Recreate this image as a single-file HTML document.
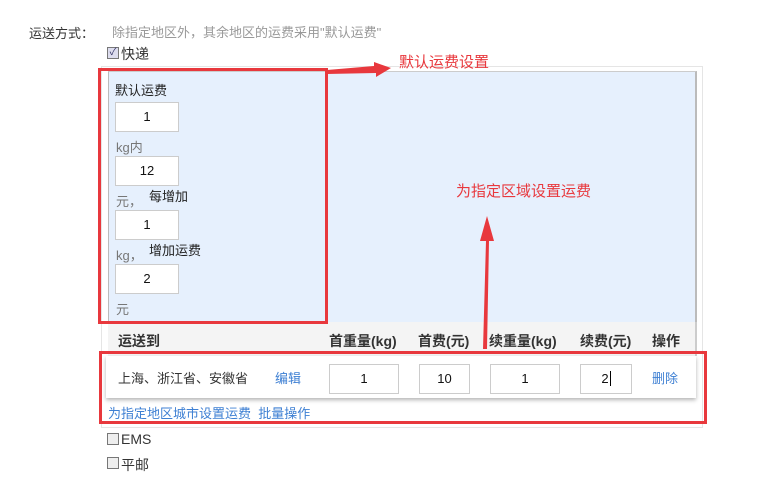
<!DOCTYPE html>
<html><head><meta charset="utf-8"><style>
body{margin:0;width:764px;height:477px;background:#fff;position:relative;overflow:hidden;font-family:"Liberation Sans","Noto Sans CJK SC",sans-serif;font-size:13px;color:#333}
.a{position:absolute;white-space:nowrap}
.inp{position:absolute;background:#fff;border:1px solid #ccc;box-sizing:border-box;text-align:center;font-size:13px;color:#111}
.cb{position:absolute;width:12px;height:12px;border:1px solid #777;background:#eee;box-sizing:border-box}
.red{position:absolute;border:3px solid #e8383d;box-sizing:border-box}
.lnk{color:#3d7fd3}
.h{font-weight:bold;font-size:14px;color:#333}
</style></head><body>
<div class="a" style="left:29px;top:23px;color:#333">运送方式：</div>
<div class="a" style="left:112px;top:22px;color:#999">除指定地区外，其余地区的运费采用"默认运费"</div>
<div class="cb" style="left:107px;top:47px;background:#dde;font-size:10px;line-height:10px;color:#336;text-align:center">✓</div>
<div class="a" style="left:121px;top:44px;font-size:14px">快递</div>

<div style="position:absolute;left:101px;top:66px;width:602px;height:362px;border:1px solid #e5e5e5;box-sizing:border-box"></div>
<div style="position:absolute;left:108px;top:71px;width:589px;height:251px;background:#e6f0fd;border-left:1px solid #bbb;border-top:1px solid #ccc;border-right:2px solid #bbb;box-sizing:border-box"></div>
<div style="position:absolute;left:108px;top:322px;width:589px;height:34px;background:#f4f4f4;border-right:2px solid #ccc;box-sizing:border-box"></div>

<div class="a" style="left:115px;top:80px;font-size:13px;color:#222">默认运费</div>
<div class="inp" style="left:115px;top:102px;width:64px;height:30px;line-height:28px">1</div>
<div class="a" style="left:116px;top:137px;color:#777">kg内</div>
<div class="inp" style="left:115px;top:156px;width:64px;height:30px;line-height:28px">12</div>
<div class="a" style="left:116px;top:191px;color:#777">元，</div>
<div class="a" style="left:149px;top:186px;color:#222">每增加</div>
<div class="inp" style="left:115px;top:210px;width:64px;height:30px;line-height:28px">1</div>
<div class="a" style="left:116px;top:245px;color:#777">kg，</div>
<div class="a" style="left:149px;top:240px;color:#222">增加运费</div>
<div class="inp" style="left:115px;top:264px;width:64px;height:30px;line-height:28px">2</div>
<div class="a" style="left:116px;top:299px;color:#777">元</div>

<div class="a h" style="left:118px;top:331px">运送到</div>
<div class="a h" style="left:329px;top:331px">首重量(kg)</div>
<div class="a h" style="left:418px;top:331px">首费(元)</div>
<div class="a h" style="left:489px;top:331px">续重量(kg)</div>
<div class="a h" style="left:580px;top:331px">续费(元)</div>
<div class="a h" style="left:652px;top:331px">操作</div>

<div style="position:absolute;left:106px;top:356px;width:590px;height:42px;background:#fff;box-shadow:0 2px 4px rgba(0,0,0,.3)"></div>
<div class="a" style="left:118px;top:368px;color:#333">上海、浙江省、安徽省</div>
<div class="a lnk" style="left:275px;top:368px">编辑</div>
<div class="inp" style="left:329px;top:364px;width:70px;height:30px;line-height:28px">1</div>
<div class="inp" style="left:419px;top:364px;width:51px;height:30px;line-height:28px">10</div>
<div class="inp" style="left:490px;top:364px;width:70px;height:30px;line-height:28px">1</div>
<div class="inp" style="left:580px;top:364px;width:52px;height:30px;line-height:28px">2<span style="border-left:1px solid #000;margin-left:1px"></span></div>
<div class="a lnk" style="left:652px;top:368px">删除</div>
<div class="a lnk" style="left:108px;top:403px">为指定地区城市设置运费 &nbsp;批量操作</div>

<div class="cb" style="left:107px;top:433px"></div>
<div class="a" style="left:121px;top:431px;font-size:14px">EMS</div>
<div class="cb" style="left:107px;top:457px"></div>
<div class="a" style="left:121px;top:455px;font-size:14px">平邮</div>

<div class="red" style="left:98px;top:68px;width:230px;height:256px"></div>
<div class="red" style="left:99px;top:351px;width:608px;height:73px"></div>
<svg style="position:absolute;left:0;top:0" width="764" height="477">
<polygon points="327,70 374,66 374,62 391,68 376,77 376,73 327,74" fill="#e8383d"/>
<polygon points="483,349 486,241 480,241 487,216 494,241 489,241 487,349" fill="#e8383d"/>
</svg>
<div class="a" style="left:399px;top:51px;color:#e8383d;font-size:15px">默认运费设置</div>
<div class="a" style="left:456px;top:180px;color:#e8383d;font-size:15px">为指定区域设置运费</div>
</body></html>
